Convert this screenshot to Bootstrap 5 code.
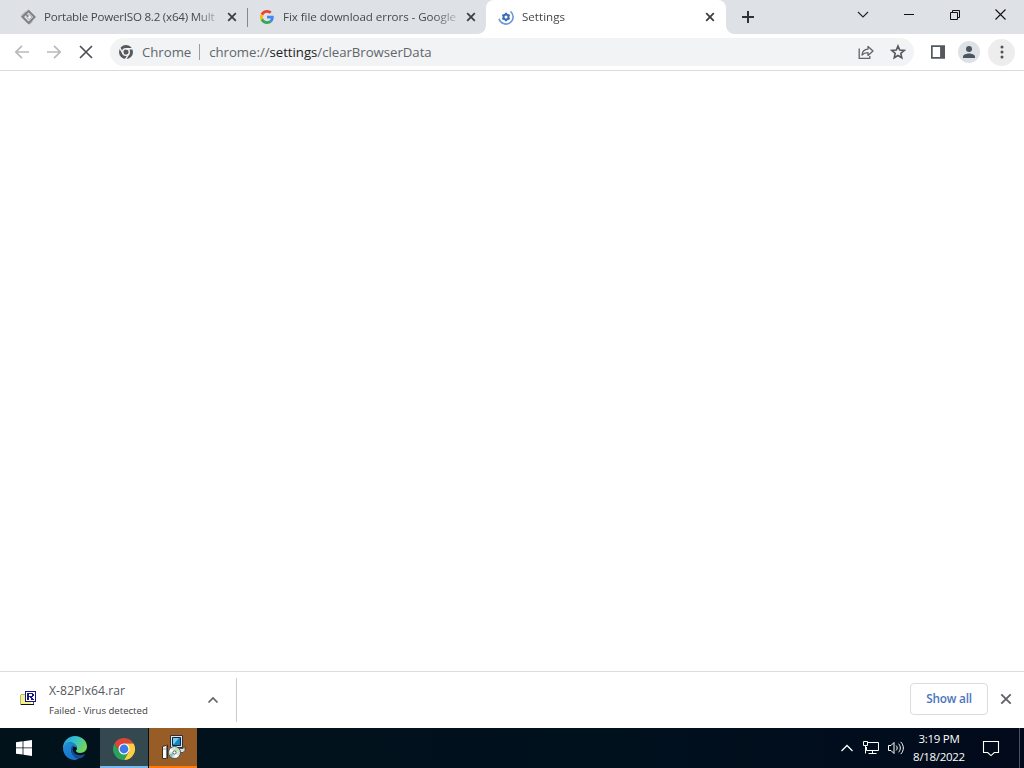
<!DOCTYPE html>
<html lang="en">
<head>
  <meta charset="UTF-8">
  <meta name="viewport" content="width=device-width, initial-scale=1">
  <title>Settings</title>
  <link href="https://cdn.jsdelivr.net/npm/bootstrap@5.3.3/dist/css/bootstrap.min.css" rel="stylesheet">

  <style>
    body {
      font-family: "Open Sans", "Noto Sans", sans-serif;
      font-size: 12px;
      line-height: 16px;
      color: #3c4043;
      background-color: #fff;
    }

    svg {
      display: block;
      flex-shrink: 0;
    }

    /* Tab strip */
    .tab-strip {
      height: 34px;
      padding-left: 8px;
      background-color: #dee1e6;
    }

    .browser-tab {
      width: 239px;
      padding-left: 12px;
      padding-right: 10px;
      color: #45494d;
    }

    .google-tab {
      width: 238px;
    }

    .tab-title {
      width: 175px;
      margin-left: 8px;
      font-size: 11.6px;
      letter-spacing: -0.23px;
      -webkit-mask-image: linear-gradient(to right, #000 86%, rgba(0, 0, 0, .2) 100%);
      mask-image: linear-gradient(to right, #000 86%, rgba(0, 0, 0, .2) 100%);
    }

    .google-tab .tab-title {
      margin-left: 9px;
      letter-spacing: -0.06px;
    }

    .current .tab-title {
      letter-spacing: 0;
    }

    .tab-divider {
      width: 1px;
      height: 19px;
      background-color: #85888d;
    }

    .browser-tab.current {
      width: 240px;
      padding-right: 11px;
      background-color: #fff;
      border-radius: 8px 8px 0 0;
    }

    .browser-tab.current::before,
    .browser-tab.current::after {
      content: "";
      position: absolute;
      bottom: 0;
      width: 8px;
      height: 8px;
    }

    .browser-tab.current::before {
      left: -8px;
      background: radial-gradient(circle at 0 0, transparent 7.5px, #fff 8px);
    }

    .browser-tab.current::after {
      right: -8px;
      background: radial-gradient(circle at 100% 0, transparent 7.5px, #fff 8px);
    }

    .window-buttons {
      height: 29px;
    }

    .window-buttons > span {
      width: 46px;
    }

    /* Toolbar */
    .toolbar {
      height: 37px;
      border-bottom: 1px solid #d9dbdd;
    }

    .nav-buttons {
      width: 110px;
      padding-left: 14px;
      gap: 16px;
    }

    .address-bar {
      width: 804px;
      height: 28px;
      padding-left: 8px;
      padding-right: 8px;
      border-radius: 14px;
      background-color: #f1f3f4;
      font-size: 13.2px;
      letter-spacing: -0.02px;
      color: #62666b;
    }

    .address-divider {
      width: 1px;
      height: 16px;
      margin: 0 9px 0 8px;
      background-color: #9a9da1;
    }

    .address-bar b {
      font-weight: 400;
      color: #202124;
    }

    .round-button {
      width: 22px;
      height: 22px;
      background-color: #dee1e6;
    }

    .menu-button {
      width: 27px;
      height: 27px;
      margin-right: 9px;
      background-color: #ededee;
    }

    /* Downloads */
    .download-shelf {
      height: 57px;
      border-top: 1px solid #dadce0;
    }

    .download-item {
      width: 237px;
      height: 44px;
      padding-left: 20px;
      border-right: 1px solid #c9cbce;
    }

    .download-info {
      width: 158px;
      margin-left: 13px;
    }

    .file-name {
      font-size: 12.2px;
      line-height: 18px;
      color: #55595e;
    }

    .file-status {
      font-size: 9.6px;
      line-height: 14px;
      margin-top: 4px;
    }

    .btn-show-all {
      width: 78px;
      height: 32px;
      padding: 0;
      margin-bottom: 2px;
      border: 1px solid #dadce0;
      border-radius: 4px;
      font-size: 11.8px;
      font-weight: 600;
      letter-spacing: -0.2px;
      color: #4a75be;
    }

    /* Taskbar */
    .taskbar {
      height: 40px;
      background: linear-gradient(to right, #01121b, #00111e 60%, #020a1b);
      color: #fff;
    }

    .task-button {
      width: 48px;
      height: 40px;
    }

    .task-edge {
      width: 52px;
      padding-left: 2px;
    }

    .task-chrome {
      background-color: #344850;
      border-bottom: 2px solid #76b9ed;
    }

    .task-installer {
      margin-left: 1px;
      background-color: #985c26;
      border-bottom: 2px solid #ff7a0b;
    }

    .clock {
      width: 68px;
      font-size: 11.5px;
      line-height: 18px;
      letter-spacing: -0.3px;
    }

    .action-center {
      margin-left: 8px;
      margin-right: 18px;
    }

    .show-desktop {
      width: 5px;
      border-left: 1px solid #4a525d;
    }
  </style>
</head>
<body>

<div class="d-flex flex-column vh-100 overflow-hidden">

  <!-- Tabs -->
  <div class="tab-strip d-flex align-items-stretch">
    <div class="browser-tab d-flex align-items-center">
      <svg width="16" height="16" viewBox="0 0 16 16" fill="none" stroke="#808286">
        <path d="M1 7.8 6 2.8M9.3 15l3-3" stroke="#b0b2b6" stroke-width="1.6"/>
        <path d="M8.6 2 14.6 8 8.6 14 2.6 8z" stroke-width="2.1"/>
        <path d="M9.2 5.4 11.8 8 9.2 10.6 6.6 8z" fill="#f4f5f6" stroke="#a0a2a6" stroke-width="1"/>
        <path d="m5.8 5 2.6 2.8" stroke-width="1.6"/>
      </svg>
      <div class="tab-title text-nowrap">Portable PowerISO 8.2 (x64) Mult</div>
      <svg class="ms-auto" width="10" height="10" viewBox="0 0 10 10" stroke="#3c4043" stroke-width="1.8"><path d="m1.2 1.2 7.6 7.6M8.8 1.2 1.2 8.8"/></svg>
    </div>
    <div class="tab-divider align-self-center"></div>
    <div class="browser-tab google-tab d-flex align-items-center">
      <svg width="14" height="14" viewBox="0 0 48 48">
        <path fill="#ea4335" d="M24 9.5c3.5 0 6.7 1.2 9.2 3.6l6.9-6.9C35.9 2.4 30.5 0 24 0 14.6 0 6.5 5.4 2.6 13.2l8 6.2C12.4 13.7 17.7 9.5 24 9.5z"/>
        <path fill="#4285f4" d="M47 24.6c0-1.6-.2-3.1-.4-4.6H24v9h12.9c-.6 3-2.2 5.5-4.8 7.2l7.7 6C44.4 38 47 31.8 47 24.6z"/>
        <path fill="#fbbc05" d="M10.5 28.6a14 14 0 0 1 0-9.2l-8-6.2a24 24 0 0 0 0 21.6z"/>
        <path fill="#34a853" d="M24 48c6.5 0 11.9-2.1 15.8-5.8l-7.7-6C30 37.7 27.2 38.5 24 38.5c-6.3 0-11.6-4.2-13.5-9.9l-8 6.2C6.5 42.6 14.6 48 24 48z"/>
      </svg>
      <div class="tab-title text-nowrap">Fix file download errors - Google</div>
      <svg class="ms-auto" width="10" height="10" viewBox="0 0 10 10" stroke="#3c4043" stroke-width="1.8"><path d="m1.2 1.2 7.6 7.6M8.8 1.2 1.2 8.8"/></svg>
    </div>
    <div class="browser-tab current position-relative d-flex align-items-center">
      <svg width="16" height="16" viewBox="0 0 16 16" fill="none" stroke="#3a6fba">
        <path d="M12.5 2.3A7.2 7.2 0 1 1 1 9.8" stroke="#7098d2" stroke-width="1.6"/>
        <circle cx="8" cy="8" r="2.5" stroke-width="2"/>
        <path d="M8 3.8v1.5M8 10.7v1.5M4.4 5.8l1.3.8M10.3 9.4l1.3.8M4.4 10.2l1.3-.8M10.3 6.6l1.3-.8" stroke-width="2"/>
      </svg>
      <div class="tab-title text-nowrap">Settings</div>
      <svg class="ms-auto" width="10" height="10" viewBox="0 0 10 10" stroke="#3c4043" stroke-width="1.8"><path d="m1.2 1.2 7.6 7.6M8.8 1.2 1.2 8.8"/></svg>
    </div>
    <svg class="align-self-center ms-3" width="12" height="12" viewBox="0 0 12 12" stroke="#303336" stroke-width="2"><path d="M6 0v12M0 6h12"/></svg>
    <div class="window-buttons d-flex align-items-center ms-auto">
      <span class="d-flex justify-content-center"><svg width="12" height="12" viewBox="0 0 12 12" fill="none" stroke="#222" stroke-width="1.1"><path d="m1 3 5 5 5-5"/></svg></span>
      <span class="d-flex justify-content-center"><svg width="10" height="10" viewBox="0 0 10 10" stroke="#111"><path d="M0 4.5h10"/></svg></span>
      <span class="d-flex justify-content-center"><svg width="10" height="10" viewBox="0 0 10 10" fill="none" stroke="#111"><path d="M.5 2.5h7v7h-7zM2.5 2.5v-2h7v7h-2"/></svg></span>
      <span class="d-flex justify-content-center"><svg width="12" height="12" viewBox="0 0 12 12" stroke="#111" stroke-width="1.1"><path d="m.5.5 10 10M10.5.5l-10 10"/></svg></span>
    </div>
  </div>

  <!-- Toolbar -->
  <div class="toolbar d-flex align-items-center">
    <div class="nav-buttons d-flex align-items-center">
      <svg width="16" height="16" viewBox="0 0 16 16" fill="none" stroke="#b7b9bc" stroke-width="1.7"><path d="M15 8H2M8 1.8 1.8 8 8 14.2"/></svg>
      <svg width="16" height="16" viewBox="0 0 16 16" fill="none" stroke="#b7b9bc" stroke-width="1.7"><path d="M1 8h13M8 1.8 14.2 8 8 14.2"/></svg>
      <svg width="16" height="16" viewBox="0 0 16 16" stroke="#4d5054" stroke-width="1.7"><path d="m2 2 12 12M14 2 2 14"/></svg>
    </div>
    <div class="address-bar d-flex align-items-center">
      <svg width="16" height="16" viewBox="0 0 16 16">
        <circle cx="8" cy="8" r="7" fill="#55595e"/>
        <circle cx="8" cy="8" r="3.3" fill="none" stroke="#f1f3f4" stroke-width="1.5"/>
        <path d="M8 4.7h6.8M5.1 9.6 1.8 3.8M10.9 9.6 7.5 15.4" stroke="#f1f3f4" stroke-width="1.4"/>
      </svg>
      <span class="ms-2">Chrome</span>
      <span class="address-divider"></span>
      <span class="address-url">chrome://<b>settings</b>/clearBrowserData</span>
      <svg class="ms-auto" width="16" height="16" viewBox="0 0 16 16" fill="none" stroke="#5f6368" stroke-width="1.3">
        <path d="M1.2 4.5v9.8h10.6V12"/>
        <path d="M4 11c.3-3.8 2.3-5.8 6-5.9V2.4L15 7l-5 4.4V8.7C7.4 8.7 5.4 9.3 4 11z" stroke-linejoin="round"/>
      </svg>
      <svg class="ms-3" width="16" height="16" viewBox="0 0 16 16" fill="none" stroke="#55595e" stroke-width="1.6"><path d="m8 2 1.7 4.1 4.4.4-3.3 2.9 1 4.4L8 11.5l-3.8 2.3 1-4.4-3.3-2.9 4.4-.4z"/></svg>
    </div>
    <svg class="ms-3" width="16" height="16" viewBox="0 0 16 16"><path fill="#55595e" fill-rule="evenodd" d="M1 1.2h14v13.6H1zm1.7 1.7v10.2h7.4V2.9z"/></svg>
    <span class="round-button rounded-circle d-flex align-items-center justify-content-center ms-auto">
      <svg width="14" height="14" viewBox="0 0 14 14" fill="#4b5561"><circle cx="7" cy="4" r="3"/><path d="M1 13v-1.6C1 9.4 4.6 8.4 7 8.4s6 1 6 3V13z"/></svg>
    </span>
    <span class="menu-button rounded-circle d-flex align-items-center justify-content-center ms-2">
      <svg width="4" height="14" viewBox="0 0 4 14" fill="#4f5256"><circle cx="2" cy="2" r="1.5"/><circle cx="2" cy="7" r="1.5"/><circle cx="2" cy="12" r="1.5"/></svg>
    </span>
  </div>

  <!-- Page -->
  <div class="flex-grow-1 bg-white"></div>

  <!-- Downloads -->
  <div class="download-shelf d-flex align-items-center">
    <div class="download-item d-flex align-items-center">
      <svg class="mb-1" width="16" height="16" viewBox="0 0 16 16" shape-rendering="crispEdges">
        <path d="M0 5h1V4h4v11H0z" fill="#b4b56a"/>
        <path d="M1 5h10v9H1z" fill="#f2f291"/>
        <path d="M1 14h13v1H1z" fill="#111"/>
        <path d="M13 12h1v2h-1z" fill="#555"/>
        <path d="M5 1h11v11H5z" fill="#17178c"/>
        <path d="M6 2h9v9H6z" fill="#fff"/>
        <path d="M7 3h6v1h1v2h-1v1h-1v1h1v1h1v1h-3V8h-1V7H9v3H7zm2 1v2h3V4z" fill="#17178c" fill-rule="evenodd"/>
      </svg>
      <div class="download-info">
        <div class="file-name">X-82PIx64.rar</div>
        <div class="file-status">Failed - Virus detected</div>
      </div>
      <svg width="12" height="12" viewBox="0 0 12 12" fill="none" stroke="#5f6368" stroke-width="1.7"><path d="m1.5 8.5 4.5-4.5 4.5 4.5"/></svg>
    </div>
    <button type="button" class="btn btn-show-all ms-auto">Show all</button>
    <svg class="mx-2 mb-1" width="20" height="20" viewBox="0 0 20 20" stroke="#5f6368" stroke-width="1.9"><path d="m5.3 6.3 9.4 9.4M14.7 6.3l-9.4 9.4"/></svg>
  </div>

  <!-- Taskbar -->
  <div class="taskbar d-flex align-items-stretch">
    <div class="task-button d-flex align-items-center justify-content-center">
      <svg width="16" height="16" viewBox="0 0 16 16" fill="#fff"><path d="M0 2.2 6.6 1.3v6.2H0zM7.4 1.2 16 0v7.5H7.4zM0 8.3h6.6v6.3L0 13.7zM7.4 8.3H16V16l-8.6-1.2z"/></svg>
    </div>
    <div class="task-button task-edge d-flex align-items-center justify-content-center">
      <svg width="24" height="24" viewBox="0 0 24 24">
        <defs>
          <linearGradient id="edgeTop" x1="0" y1="0" x2="1" y2=".5">
            <stop offset="0" stop-color="#2299df"/>
            <stop offset=".5" stop-color="#34c1cf"/>
            <stop offset="1" stop-color="#71d65b"/>
          </linearGradient>
          <linearGradient id="edgeSide" x1="0" y1="0" x2=".6" y2="1">
            <stop offset="0" stop-color="#238edb"/>
            <stop offset="1" stop-color="#1672c8"/>
          </linearGradient>
        </defs>
        <path fill="url(#edgeSide)" d="M0 12C0 8 4 6.5 7.5 6.5c4 0 6.5 2.5 6.5 5.5-2-2-4.6-1.6-5.4 1-1 4 2.2 8.4 7 9.6-1.2.9-2.4 1.4-3.6 1.4C5 24 0 18.5 0 12z"/>
        <path fill="#124d95" d="M8.8 10.3c-2 4.7.7 10.5 6.2 12.1 3 .4 5-1.1 6.7-3.4.4-.6 0-1-.6-.7-5.6 2.4-11.3-.6-11.3-5 0-1.6.6-2.6 1.7-3.3-.9-.6-2-.5-2.7.3z"/>
        <path fill="url(#edgeTop)" d="M0 12C0 5.4 5.2 0 12 0c7 0 12 5.2 12 10.5 0 4-3 6.4-6.8 6.4-2.8 0-4.3-1-4.3-1.8 0-.8 1.1-1 1.1-3.1 0-3-2.9-5.5-6.5-5.5C3.8 6.5 1.3 8.3 0 12z"/>
      </svg>
    </div>
    <div class="task-button task-chrome d-flex align-items-center justify-content-center">
      <svg class="mt-1" width="22" height="22" viewBox="0 0 24 24">
        <path fill="#dc4437" d="M1.6 6a12 12 0 0 1 20.8 0H12l-5.2 9z"/>
        <path fill="#ffcd40" d="M12 6h10.4A12 12 0 0 1 12 24l5.2-9z"/>
        <path fill="#27a35a" d="M1.6 6A12 12 0 0 0 12 24l5.2-9H6.8z"/>
        <circle cx="12" cy="12" r="6" fill="#fff"/>
        <circle cx="12" cy="12" r="4.8" fill="#3d79ea"/>
      </svg>
    </div>
    <div class="task-button task-installer d-flex align-items-center justify-content-center">
      <svg width="25" height="26" viewBox="0 0 25 26">
        <path d="M9.5 1.5h12v12h-12z" fill="#dfe4e8" stroke="#29323c"/>
        <path d="M11.5 3.5h8v8h-8z" fill="#1583c0" stroke="#0b2748"/>
        <path d="M12 4h6l-5 6h-1z" fill="#75cdea"/>
        <path d="M14 14.5h8l2-2v4l-2 2h-8z" fill="#dcdedf" stroke="#343b43" stroke-width=".8"/>
        <path d="M1.5 12.5 6.5 11v13.5h-5z" fill="#fafaf7" stroke="#3b2a20"/>
        <path d="M5.5 11.5v13" stroke="#77787c"/>
        <path d="M2 15h3" stroke="#a5a6a8"/>
        <circle cx="13.5" cy="18.5" r="6" fill="#dbe3e1" stroke="#4d5660"/>
        <path d="m13.5 18.5 1-5.5 4 3z" fill="#b6e59a"/>
        <path d="m13.5 18.5-5 2 2 3z" fill="#76c4b3"/>
        <path d="m13.5 18.5 1 5.5 3-1.5zM13.5 18.5l-4-4-1 3z" fill="#fff"/>
        <circle cx="13.5" cy="18.5" r="1.6" fill="#fff" stroke="#55606a"/>
      </svg>
    </div>
    <div class="d-flex align-items-center ms-auto">
      <svg width="14" height="14" viewBox="0 0 14 14" fill="none" stroke="#fff" stroke-width="1.3"><path d="m1.5 10 5.5-5.5 5.5 5.5"/></svg>
      <svg class="ms-2" width="18" height="16" viewBox="0 0 18 16" fill="none" stroke="#fff">
        <path d="M5.5 2.5h11v8h-12V7M1.5 1.5h4v4h-4zM3.5 5.5v8M10.5 10.5v3M6.5 13.5h8"/>
      </svg>
      <svg class="ms-2" width="17" height="16" viewBox="1 0 17 16" fill="none" stroke="#fff">
        <path d="M1.5 5.5H4l3-3v11l-3-3H1.5z"/>
        <path d="M9.2 5.6c1.3 1.3 1.3 3.5 0 4.8M11.5 3.7c2.4 2.4 2.4 6.2 0 8.6M13.7 1.9c3.5 3.5 3.5 8.7 0 12.2"/>
      </svg>
      <div class="clock text-center">3:19 PM<br>8/18/2022</div>
    </div>
    <div class="action-center d-flex align-items-center">
      <svg width="20" height="18" viewBox="0 0 20 18" fill="none" stroke="#fff" stroke-width="1.1"><path d="M2.5 2.5h15v11h-4.2L10 16.6l-3.3-3.1H2.5z"/></svg>
    </div>
    <div class="show-desktop"></div>
  </div>

</div>

<script src="https://cdn.jsdelivr.net/npm/bootstrap@5.3.3/dist/js/bootstrap.bundle.min.js"></script>
</body>
</html>
